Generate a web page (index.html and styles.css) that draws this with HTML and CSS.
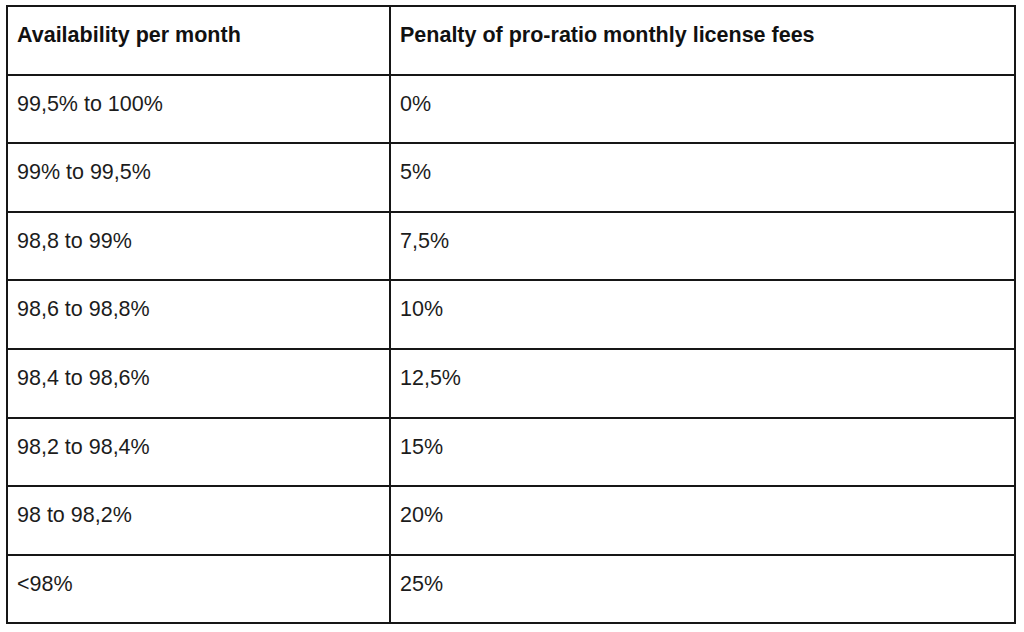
FILE: index.html
```html
<!DOCTYPE html>
<html>
<head>
<meta charset="utf-8">
<link rel="stylesheet" href="styles.css">
</head>
<body>
<div class="page">
<table class="sla">
  <colgroup><col class="c1"><col class="c2"></colgroup>
  <thead>
    <tr><th>Availability per month</th><th>Penalty of pro-ratio monthly license fees</th></tr>
  </thead>
  <tbody>
    <tr><td>99,5% to 100%</td><td>0%</td></tr>
    <tr><td>99% to 99,5%</td><td>5%</td></tr>
    <tr><td>98,8 to 99%</td><td>7,5%</td></tr>
    <tr><td>98,6 to 98,8%</td><td>10%</td></tr>
    <tr><td>98,4 to 98,6%</td><td>12,5%</td></tr>
    <tr><td>98,2 to 98,4%</td><td>15%</td></tr>
    <tr><td>98 to 98,2%</td><td>20%</td></tr>
    <tr><td>&lt;98%</td><td>25%</td></tr>
  </tbody>
</table>
</div>
</body>
</html>
```
FILE: styles.css
```css
html, body {
  margin: 0;
  padding: 0;
  background: #ffffff;
}
.page {
  padding: 5px 0 0 6px;
}
.sla {
  border-collapse: collapse;
  width: 1010px;
  table-layout: fixed;
  font-family: "Liberation Sans", Arial, sans-serif;
  font-size: 21.5px;
  color: #1c1c1c;
}
.c1 { width: 383px; }
.c2 { width: auto; }
.sla th, .sla td {
  border: 2px solid #161616;
  height: 68.6px;
  padding: 16px 9px 0 9px;
  vertical-align: top;
  text-align: left;
  line-height: 1.15;
  box-sizing: border-box;
}
.sla th {
  font-weight: bold;
  color: #111;
}
```
